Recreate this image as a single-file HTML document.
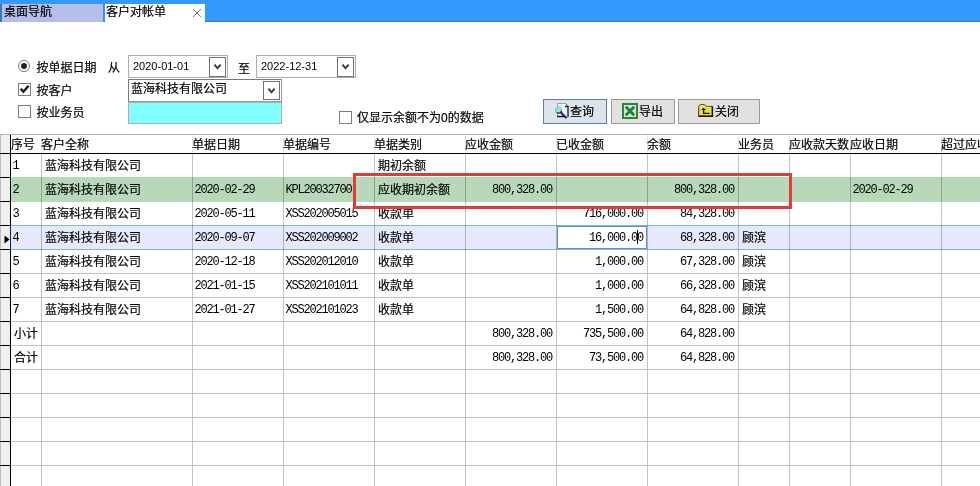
<!DOCTYPE html>
<html lang="zh-CN"><head><meta charset="utf-8"><title>客户对帐单</title>
<style>
html,body{margin:0;padding:0;}
body{width:980px;height:486px;overflow:hidden;background:#fff;position:relative;font-family:"Liberation Sans","Noto Sans CJK SC",sans-serif;font-size:12px;color:#000;font-weight:400;-webkit-text-stroke:0.18px #000;}
.a{position:absolute;white-space:nowrap;}
.t{position:absolute;white-space:nowrap;line-height:14px;height:14px;font-size:12px;}
.m{font-family:"Liberation Mono","Noto Sans CJK SC",monospace;font-size:12px;letter-spacing:-1.2px;-webkit-text-stroke:0;}
.r{text-align:right;}
.hl{position:absolute;height:1px;background:#c2c2c2;}
.vl{position:absolute;width:1px;background:rgba(0,0,0,0.24);}
</style></head><body><div id="app" style="position:absolute;left:0;top:0;width:980px;height:486px;will-change:transform;">

<div class="a" style="left:0;top:0;width:980px;height:22px;background:#3399fe;"></div>
<div class="a" style="left:0;top:21px;width:980px;height:1px;background:#3f74ad;"></div>
<div class="a" style="left:0;top:4px;width:104px;height:18px;background:#b3bee9;border-left:2px solid #3a78bd;border-right:1px solid #4a86cf;box-sizing:border-box;"></div>
<div class="t" style="left:4px;top:5px;">桌面导航</div>
<div class="a" style="left:105px;top:4px;width:100px;height:18px;background:#fff;"></div>
<div class="t" style="left:106px;top:5px;">客户对帐单</div>
<svg class="a" style="left:192px;top:8px;" width="10" height="10" viewBox="0 0 10 10"><path d="M1 1 L9 9 M9 1 L1 9" stroke="#5b6472" stroke-width="0.9" fill="none"/></svg>
<div class="a" style="left:18px;top:60px;width:12px;height:12px;border:1px solid #777;border-radius:50%;box-sizing:border-box;background:#fff;"></div>
<div class="a" style="left:21px;top:63px;width:6px;height:6px;border-radius:50%;background:#222;"></div>
<div class="t" style="left:36.5px;top:61px;">按单据日期</div>
<div class="t" style="left:108px;top:61px;">从</div>
<div class="a" style="left:128px;top:55px;width:100px;height:23px;border:1px solid #adadad;box-sizing:border-box;background:#fff;"></div>
<div class="t" style="left:133px;top:59px;font-size:11px;-webkit-text-stroke:0;">2020-01-01</div>
<div class="a" style="left:209px;top:57px;width:17px;height:20px;border:1px solid #707070;box-sizing:border-box;background:#fff;"></div>
<svg class="a" style="left:213px;top:63px;" width="9" height="8" viewBox="0 0 9 8"><path d="M1.4 1.6 L4.5 5.2 L7.6 1.6" stroke="#404040" stroke-width="2" fill="none"/></svg>
<div class="t" style="left:238px;top:62px;">至</div>
<div class="a" style="left:256px;top:55px;width:100px;height:23px;border:1px solid #adadad;box-sizing:border-box;background:#fff;"></div>
<div class="t" style="left:261px;top:59px;font-size:11px;-webkit-text-stroke:0;">2022-12-31</div>
<div class="a" style="left:337px;top:57px;width:17px;height:20px;border:1px solid #707070;box-sizing:border-box;background:#fff;"></div>
<svg class="a" style="left:341px;top:63px;" width="9" height="8" viewBox="0 0 9 8"><path d="M1.4 1.6 L4.5 5.2 L7.6 1.6" stroke="#404040" stroke-width="2" fill="none"/></svg>
<div class="a" style="left:18px;top:83px;width:13px;height:13px;border:1px solid #7d7d7d;box-sizing:border-box;background:#fff;"></div>
<svg class="a" style="left:19px;top:84px;" width="11" height="11" viewBox="0 0 11 11"><path d="M1.6 4.8 L4.4 7.8 L9.6 1.8" stroke="#1a1a1a" stroke-width="2.4" fill="none"/></svg>
<div class="t" style="left:36.5px;top:84px;">按客户</div>
<div class="a" style="left:128px;top:79px;width:154px;height:23px;border:1px solid #7a7a7a;border-bottom-color:#9a9a9a;border-right-color:#9a9a9a;box-sizing:border-box;background:#fff;"></div>
<div class="t" style="left:131px;top:82px;">蓝海科技有限公司</div>
<div class="a" style="left:263px;top:81px;width:17px;height:19px;border:1px solid #707070;box-sizing:border-box;background:#fff;"></div>
<svg class="a" style="left:267px;top:87px;" width="9" height="8" viewBox="0 0 9 8"><path d="M1.4 1.6 L4.5 5.2 L7.6 1.6" stroke="#404040" stroke-width="2" fill="none"/></svg>
<div class="a" style="left:18px;top:105px;width:13px;height:13px;border:1px solid #7d7d7d;box-sizing:border-box;background:#fff;"></div>
<div class="t" style="left:36.5px;top:106px;">按业务员</div>
<div class="a" style="left:128px;top:102px;width:154px;height:22px;border:1px solid #b0b0b0;box-sizing:border-box;background:#80ffff;"></div>
<div class="a" style="left:339px;top:111px;width:13px;height:13px;border:1px solid #7d7d7d;box-sizing:border-box;background:#fff;"></div>
<div class="t" style="left:357px;top:111px;">仅显示余额不为0的数据</div>
<div class="a" style="left:543px;top:99px;width:64px;height:25px;border:1px solid #5b7fa6;box-sizing:border-box;background:#dde3ea;"></div>
<div class="t" style="left:570px;top:105px;">查询</div>
<div class="a" style="left:611px;top:99px;width:64px;height:25px;border:1px solid #9a9a9a;box-sizing:border-box;background:#e1e1e1;"></div>
<div class="t" style="left:639px;top:105px;">导出</div>
<div class="a" style="left:678px;top:99px;width:82px;height:25px;border:1px solid #9a9a9a;box-sizing:border-box;background:#e1e1e1;"></div>
<div class="t" style="left:715px;top:105px;">关闭</div>
<svg class="a" style="left:555px;top:103px;" width="14" height="16" viewBox="0 0 14 16">
<path d="M2.5 0.5 H10.5 L13 3 V14 H2.5 Z" fill="#eef1fb"/>
<path d="M2.5 13.5 V0.5 H10.5" fill="none" stroke="#9aa3b5" stroke-width="1"/>
<path d="M10 3.5 H13 V14 M2 13.5 H9" fill="none" stroke="#15171c" stroke-width="1.3"/>
<path d="M10.5 0.5 L13 3" fill="none" stroke="#555c6a" stroke-width="1"/>
<circle cx="3.6" cy="7" r="3.1" fill="#8ee9e6" stroke="#5fb9c0" stroke-width="0.8"/>
<path d="M1.6 9.4 A3.1 3.1 0 0 0 6.6 7.6" fill="none" stroke="#1d2a3a" stroke-width="1.1"/>
<path d="M6.2 9.6 L11 14.4" stroke="#161f63" stroke-width="2.2" stroke-linecap="round"/>
<path d="M7.4 9.6 L11.4 13.6" stroke="#a9b8ff" stroke-width="0.9" stroke-linecap="round"/>
</svg>
<svg class="a" style="left:622px;top:103px;" width="16" height="16" viewBox="0 0 16 16">
<rect x="0" y="0" width="16" height="16" fill="#357d41"/>
<rect x="2" y="2" width="12" height="12" fill="#c3f0c5"/>
<path d="M3.8 3.8 L12.2 12.2 M12.2 3.8 L3.8 12.2" stroke="#2f7a3c" stroke-width="2.8"/>
</svg>
<svg class="a" style="left:698px;top:104px;" width="16" height="13" viewBox="0 0 16 13">
<path d="M0.6 2.6 L2.2 0.6 H6.6 L8 2.4 H14.4 V12.2 H0.6 Z" fill="#e6da45" stroke="#4a4412" stroke-width="1"/>
<path d="M2.4 1.6 H6.4" stroke="#f6f0a8" stroke-width="1"/>
<path d="M1.2 3.4 H13" stroke="#f1e96e" stroke-width="1"/>
<path d="M14.4 2.4 V12.2 H0.6" fill="none" stroke="#14130a" stroke-width="1.5"/>
<path d="M3.2 6 L5.6 3.8 L8 6 Z" fill="#111"/>
<path d="M5.6 5 V9.4 H11.6" stroke="#111" stroke-width="1.3" fill="none"/>
</svg>
<div class="a" style="left:0;top:134px;width:980px;height:1px;background:#b4b4b4;"></div>
<div class="a" style="left:11px;top:177px;width:969px;height:25px;background:#b7d8b9;"></div>
<div class="a" style="left:11px;top:225px;width:969px;height:25px;background:#e6e9fb;border-top:1px solid #86b3dd;border-bottom:1px solid #86b3dd;box-sizing:border-box;"></div>
<div class="a" style="left:0;top:135px;width:10px;height:351px;background:#efefef;border-left:1px solid #bdbdbd;box-sizing:border-box;"></div>
<div class="vl" style="left:41px;top:135px;height:18px;background:#e4e4e4;"></div>
<div class="vl" style="left:41px;top:154px;height:332px;"></div>
<div class="vl" style="left:192px;top:135px;height:18px;background:#e4e4e4;"></div>
<div class="vl" style="left:192px;top:154px;height:332px;"></div>
<div class="vl" style="left:283px;top:135px;height:18px;background:#e4e4e4;"></div>
<div class="vl" style="left:283px;top:154px;height:332px;"></div>
<div class="vl" style="left:374px;top:135px;height:18px;background:#e4e4e4;"></div>
<div class="vl" style="left:374px;top:154px;height:332px;"></div>
<div class="vl" style="left:465px;top:135px;height:18px;background:#e4e4e4;"></div>
<div class="vl" style="left:465px;top:154px;height:332px;"></div>
<div class="vl" style="left:556px;top:135px;height:18px;background:#e4e4e4;"></div>
<div class="vl" style="left:556px;top:154px;height:332px;"></div>
<div class="vl" style="left:647px;top:135px;height:18px;background:#e4e4e4;"></div>
<div class="vl" style="left:647px;top:154px;height:332px;"></div>
<div class="vl" style="left:738px;top:135px;height:18px;background:#e4e4e4;"></div>
<div class="vl" style="left:738px;top:154px;height:332px;"></div>
<div class="vl" style="left:789px;top:135px;height:18px;background:#e4e4e4;"></div>
<div class="vl" style="left:789px;top:154px;height:332px;"></div>
<div class="vl" style="left:850px;top:135px;height:18px;background:#e4e4e4;"></div>
<div class="vl" style="left:850px;top:154px;height:332px;"></div>
<div class="vl" style="left:941px;top:135px;height:18px;background:#e4e4e4;"></div>
<div class="vl" style="left:941px;top:154px;height:332px;"></div>
<div class="hl" style="left:0;top:177px;width:10px;background:#000;"></div>
<div class="hl" style="left:0;top:201px;width:10px;background:#000;"></div>
<div class="hl" style="left:0;top:225px;width:10px;background:#000;"></div>
<div class="hl" style="left:0;top:249px;width:10px;background:#000;"></div>
<div class="hl" style="left:11px;top:273px;width:969px;"></div>
<div class="hl" style="left:0;top:273px;width:10px;background:#000;"></div>
<div class="hl" style="left:11px;top:297px;width:969px;"></div>
<div class="hl" style="left:0;top:297px;width:10px;background:#000;"></div>
<div class="hl" style="left:11px;top:321px;width:969px;"></div>
<div class="hl" style="left:0;top:321px;width:10px;background:#000;"></div>
<div class="hl" style="left:11px;top:345px;width:969px;"></div>
<div class="hl" style="left:0;top:345px;width:10px;background:#000;"></div>
<div class="hl" style="left:11px;top:369px;width:969px;"></div>
<div class="hl" style="left:0;top:369px;width:10px;background:#000;"></div>
<div class="hl" style="left:11px;top:393px;width:969px;"></div>
<div class="hl" style="left:0;top:393px;width:10px;background:#000;"></div>
<div class="hl" style="left:11px;top:417px;width:969px;"></div>
<div class="hl" style="left:0;top:417px;width:10px;background:#000;"></div>
<div class="hl" style="left:11px;top:441px;width:969px;"></div>
<div class="hl" style="left:0;top:441px;width:10px;background:#000;"></div>
<div class="hl" style="left:11px;top:465px;width:969px;"></div>
<div class="hl" style="left:0;top:465px;width:10px;background:#000;"></div>
<div class="hl" style="left:11px;top:489px;width:969px;"></div>
<div class="hl" style="left:0;top:489px;width:10px;background:#000;"></div>
<div class="a" style="left:0;top:153px;width:980px;height:1px;background:#000;"></div>
<div class="a" style="left:10px;top:135px;width:1px;height:351px;background:#000;"></div>
<div class="a" style="left:10px;top:225px;width:1px;height:25px;background:#15156b;"></div>
<div class="t" style="left:11px;top:138px;">序号</div>
<div class="t" style="left:41px;top:138px;">客户全称</div>
<div class="t" style="left:192px;top:138px;">单据日期</div>
<div class="t" style="left:283px;top:138px;">单据编号</div>
<div class="t" style="left:374px;top:138px;">单据类别</div>
<div class="t" style="left:465px;top:138px;">应收金额</div>
<div class="t" style="left:556px;top:138px;">已收金额</div>
<div class="t" style="left:647px;top:138px;">余额</div>
<div class="t" style="left:738px;top:138px;">业务员</div>
<div class="t" style="left:789px;top:138px;">应收款天数</div>
<div class="t" style="left:850px;top:138px;">应收日期</div>
<div class="t" style="left:941px;top:138px;">超过应收</div>
<div class="a" style="left:557px;top:226px;width:90px;height:23px;background:#fff;border:1px solid #5b8fd4;box-sizing:border-box;"></div>
<div class="a" style="left:637px;top:230px;width:1px;height:14px;background:#000;"></div>
<div class="t m" style="left:12.5px;top:159px;">1</div>
<div class="t" style="left:45.0px;top:159px;">蓝海科技有限公司</div>
<div class="t" style="left:378.0px;top:159px;">期初余额</div>
<div class="t m" style="left:12.5px;top:183px;">2</div>
<div class="t" style="left:45.0px;top:183px;">蓝海科技有限公司</div>
<div class="t m" style="left:194.5px;top:183px;">2020-02-29</div>
<div class="t m" style="left:285.5px;top:183px;">KPL20032700.</div>
<div class="t" style="left:378.0px;top:183px;">应收期初余额</div>
<div class="t m r" style="left:465px;top:183px;width:87px;">800,328.00</div>
<div class="t m r" style="left:647px;top:183px;width:87px;">800,328.00</div>
<div class="t m" style="left:852.5px;top:183px;">2020-02-29</div>
<div class="t m" style="left:12.5px;top:207px;">3</div>
<div class="t" style="left:45.0px;top:207px;">蓝海科技有限公司</div>
<div class="t m" style="left:194.5px;top:207px;">2020-05-11</div>
<div class="t m" style="left:285.5px;top:207px;">XSS202005015</div>
<div class="t" style="left:378.0px;top:207px;">收款单</div>
<div class="t m r" style="left:556px;top:207px;width:87px;">716,000.00</div>
<div class="t m r" style="left:647px;top:207px;width:87px;">84,328.00</div>
<div class="t m" style="left:12.5px;top:231px;">4</div>
<div class="t" style="left:45.0px;top:231px;">蓝海科技有限公司</div>
<div class="t m" style="left:194.5px;top:231px;">2020-09-07</div>
<div class="t m" style="left:285.5px;top:231px;">XSS202009002</div>
<div class="t" style="left:378.0px;top:231px;">收款单</div>
<div class="t m r" style="left:556px;top:231px;width:87px;">16,000.00</div>
<div class="t m r" style="left:647px;top:231px;width:87px;">68,328.00</div>
<div class="t" style="left:742.0px;top:231px;">顾滨</div>
<div class="t m" style="left:12.5px;top:255px;">5</div>
<div class="t" style="left:45.0px;top:255px;">蓝海科技有限公司</div>
<div class="t m" style="left:194.5px;top:255px;">2020-12-18</div>
<div class="t m" style="left:285.5px;top:255px;">XSS202012010</div>
<div class="t" style="left:378.0px;top:255px;">收款单</div>
<div class="t m r" style="left:556px;top:255px;width:87px;">1,000.00</div>
<div class="t m r" style="left:647px;top:255px;width:87px;">67,328.00</div>
<div class="t" style="left:742.0px;top:255px;">顾滨</div>
<div class="t m" style="left:12.5px;top:279px;">6</div>
<div class="t" style="left:45.0px;top:279px;">蓝海科技有限公司</div>
<div class="t m" style="left:194.5px;top:279px;">2021-01-15</div>
<div class="t m" style="left:285.5px;top:279px;">XSS202101011</div>
<div class="t" style="left:378.0px;top:279px;">收款单</div>
<div class="t m r" style="left:556px;top:279px;width:87px;">1,000.00</div>
<div class="t m r" style="left:647px;top:279px;width:87px;">66,328.00</div>
<div class="t" style="left:742.0px;top:279px;">顾滨</div>
<div class="t m" style="left:12.5px;top:303px;">7</div>
<div class="t" style="left:45.0px;top:303px;">蓝海科技有限公司</div>
<div class="t m" style="left:194.5px;top:303px;">2021-01-27</div>
<div class="t m" style="left:285.5px;top:303px;">XSS202101023</div>
<div class="t" style="left:378.0px;top:303px;">收款单</div>
<div class="t m r" style="left:556px;top:303px;width:87px;">1,500.00</div>
<div class="t m r" style="left:647px;top:303px;width:87px;">64,828.00</div>
<div class="t" style="left:742.0px;top:303px;">顾滨</div>
<div class="t" style="left:14.0px;top:327px;">小计</div>
<div class="t m r" style="left:465px;top:327px;width:87px;">800,328.00</div>
<div class="t m r" style="left:556px;top:327px;width:87px;">735,500.00</div>
<div class="t m r" style="left:647px;top:327px;width:87px;">64,828.00</div>
<div class="t" style="left:14.0px;top:351px;">合计</div>
<div class="t m r" style="left:465px;top:351px;width:87px;">800,328.00</div>
<div class="t m r" style="left:556px;top:351px;width:87px;">73,500.00</div>
<div class="t m r" style="left:647px;top:351px;width:87px;">64,828.00</div>
<svg class="a" style="left:4px;top:235px;" width="6" height="9" viewBox="0 0 6 9"><path d="M0.5 0.5 L5.5 4.5 L0.5 8.5 Z" fill="#000"/></svg>
<div class="a" style="left:353px;top:173px;width:439px;height:36px;border:3px solid #e03c3c;box-sizing:border-box;"></div>
</div></body></html>
